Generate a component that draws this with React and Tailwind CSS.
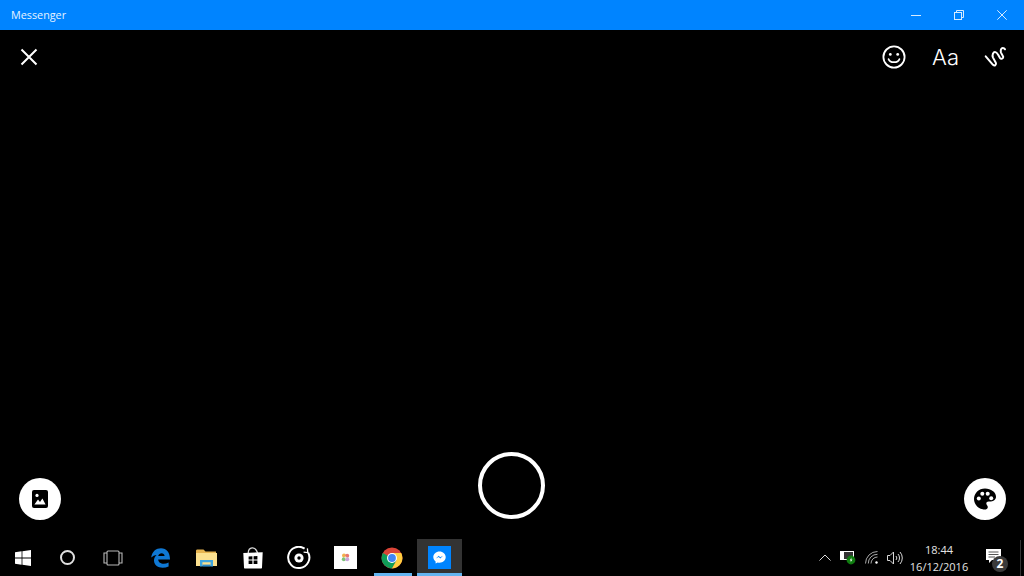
import React from 'react';

const ui = { fontFamily: '"Open Sans", "Noto Sans", sans-serif' };

function CloseIcon() {
  return (
    <svg width="18" height="18" viewBox="0 0 18 18" fill="none" stroke="white" strokeWidth="2">
      <path d="M1.5 1.5 L16.5 16.5 M16.5 1.5 L1.5 16.5" />
    </svg>
  );
}

function Smiley() {
  return (
    <svg width="24" height="24" viewBox="0 0 24 24" fill="none" stroke="white" strokeWidth="1.8">
      <circle cx="12" cy="12" r="10.6" />
      <circle cx="8.3" cy="9.4" r="1.4" fill="white" stroke="none" />
      <circle cx="15.7" cy="9.4" r="1.4" fill="white" stroke="none" />
      <path d="M6.6 14.2 C8 18.2 16 18.2 17.4 14.2" strokeLinecap="round" />
    </svg>
  );
}

function Squiggle() {
  return (
    <svg width="24" height="24" viewBox="4 3 24 24" fill="none" stroke="white" strokeWidth="2" strokeLinecap="round" strokeLinejoin="round">
      <path d="M5.7 14.3 L13 22.8 C14.6 24.2 16.8 22.8 15.8 20.8 L13 15.6 C11.8 12.4 13.4 10 15 10 C16.6 10 17.4 11.4 18.3 13 L20 16 C21 17.4 23.6 16.6 23.2 14.8 L21 10.6 C20.2 8.4 21.2 6 22.8 6 C23.8 6 24.6 6.6 25 7.3" />
    </svg>
  );
}

function ImageIcon() {
  return (
    <svg width="16" height="18" viewBox="0 0 16 18">
      <rect x="0" y="0" width="16" height="18" rx="2" fill="black" />
      <circle cx="5" cy="5.4" r="1.6" fill="white" />
      <path d="M2.4 14.4 L6 9.4 L8 12 L10.4 8.6 L13.6 14.4 Z" fill="white" />
    </svg>
  );
}

function PaletteIcon() {
  return (
    <svg width="24" height="24" viewBox="0 0 24 24">
      <path d="M12 1.5 C5.8 1.5 1 6.2 1 12 C1 17.8 5.8 22.5 12 22.5 C13.8 22.5 14.8 21.4 14.8 20 C14.8 19.2 14.4 18.7 14 18.2 C13.6 17.7 13.3 17.2 13.3 16.6 C13.3 15.3 14.3 14.4 15.6 14.4 L18 14.4 C20.9 14.4 23 12.4 23 9.8 C23 5.1 18 1.5 12 1.5 Z" fill="black" />
      <circle cx="5.8" cy="11.6" r="2" fill="white" />
      <circle cx="9.3" cy="6.8" r="2" fill="white" />
      <circle cx="14.7" cy="6.8" r="2" fill="white" />
      <circle cx="18.2" cy="11.2" r="2" fill="white" />
    </svg>
  );
}

function WindowsLogo() {
  return (
    <svg width="16" height="16" viewBox="0 0 16 16" fill="white">
      <path d="M0 2.3 L6.6 1.3 V7.5 H0 Z M7.4 1.2 L16 0 V7.5 H7.4 Z M0 8.4 H6.6 V14.7 L0 13.7 Z M7.4 8.4 H16 V16 L7.4 14.8 Z" />
    </svg>
  );
}

function TaskView() {
  return (
    <svg width="20" height="16" viewBox="0 0 20 16" fill="none" stroke="#b8b8b8" strokeWidth="1.1">
      <rect x="4" y="1" width="12" height="14" rx="1" />
      <path d="M4 3 H1 V13 H4 M16 3 H19 V13 H16" />
    </svg>
  );
}

function EdgeLogo() {
  return (
    <svg width="19" height="20" viewBox="0 0 19 20">
      <path d="M0.2 9.6 C1 3.4 5.2 0.2 10 0.2 C15.6 0.2 19 4.4 19 11.4 H7.2 C7.4 15.4 12.6 17 17.6 14.4 V18.4 C11.4 21.2 3.4 19.6 3 12.8 C2.9 10.6 3.8 8.6 5.6 7 C3.6 7.2 1.6 8.2 0.2 9.6 Z M7.2 8 H13.6 C13.4 4.2 8 4.2 7.2 8 Z" fill="#0f78d4" fillRule="evenodd" />
    </svg>
  );
}

function ExplorerLogo() {
  return (
    <svg width="21" height="18" viewBox="0 0 21 18">
      <path d="M0 2 C0 1 0.5 0.5 1.5 0.5 H7.5 L9.5 2.5 H20 V5 H0 Z" fill="#e6b450" />
      <rect x="0" y="4" width="21" height="13" fill="#fbe08f" />
      <path d="M4 17.5 V11 H17 V17.5 H14.6 V13.2 H6.4 V17.5 Z" fill="#3fa5df" />
      <rect x="6.4" y="15.6" width="8.2" height="2" fill="#2b86c5" />
    </svg>
  );
}

function StoreLogo() {
  return (
    <svg width="20" height="23" viewBox="0 0 20 23">
      <path d="M5.2 7 C5.6 1 12 -0.4 14.6 7" fill="none" stroke="#d8d8d8" strokeWidth="1.3" />
      <path d="M0.3 7 L19.7 6.2 L19 21.6 C19 22.2 18.6 22.6 18 22.6 H2 C1.4 22.6 1 22.2 1 21.6 Z" fill="white" />
      <path d="M5.6 10.4 L9.4 10.2 V13.6 H5.6 Z M10.6 10.2 L14.4 10 V13.6 H10.6 Z M5.6 14.6 H9.4 V18 H5.6 Z M10.6 14.6 H14.4 V18 H10.6 Z" fill="black" />
    </svg>
  );
}

function GrooveLogo() {
  return (
    <svg width="24" height="24" viewBox="0 0 24 24" fill="none">
      <path d="M17.6 2.6 A10.6 10.6 0 1 0 21.2 6.6" stroke="white" strokeWidth="2" />
      <path d="M20.4 2.4 L20.8 6.6 L16.6 6.2" stroke="white" strokeWidth="1.3" />
      <circle cx="12" cy="12" r="4.6" fill="white" />
      <circle cx="12" cy="12" r="1.7" fill="black" />
    </svg>
  );
}

function PinwheelTile() {
  return (
    <div className="w-[23px] h-[23px] bg-white flex items-center justify-center">
      <svg width="9" height="9" viewBox="0 0 9 9">
        <circle cx="3" cy="2.6" r="2" fill="#f2b04c" />
        <circle cx="6.2" cy="2.8" r="2" fill="#e8756f" />
        <circle cx="2.8" cy="6.2" r="2" fill="#7cc47a" />
        <circle cx="6.2" cy="6.2" r="2" fill="#c9a4dc" />
        <circle cx="4.5" cy="4.5" r="1" fill="#e9ecd8" />
      </svg>
    </div>
  );
}

function ChromeLogo() {
  return (
    <svg width="22" height="22" viewBox="0 0 22 22">
      <circle cx="11" cy="11" r="10.5" fill="#db4437" />
      <path d="M11 11 L1.8 6 A10.5 10.5 0 0 0 11 21.5 L16.2 12.5 Z" fill="#0f9d58" />
      <path d="M11 6 H20.2 A10.5 10.5 0 0 1 11 21.5 L15.4 13.5 Z" fill="#ffcd40" />
      <circle cx="11" cy="11" r="5" fill="white" />
      <circle cx="11" cy="11" r="3.9" fill="#4285f4" />
    </svg>
  );
}

function MessengerTile() {
  return (
    <div className="w-[23px] h-[23px] bg-[#0084ff] flex items-center justify-center">
      <svg width="13" height="13" viewBox="0 0 13 13">
        <path d="M6.5 0.5 C3 0.5 0.3 3 0.3 6.1 C0.3 7.9 1.2 9.4 2.6 10.4 V12.6 L4.7 11.4 C5.3 11.6 5.9 11.7 6.5 11.7 C10 11.7 12.7 9.2 12.7 6.1 C12.7 3 10 0.5 6.5 0.5 Z" fill="white" />
        <path d="M2.9 7.6 L5.7 4.7 L7.2 6.2 L10 4.7 L7.3 7.6 L5.7 6.1 Z" fill="#0084ff" />
      </svg>
    </div>
  );
}

function BatteryIcon() {
  return (
    <svg width="16" height="15" viewBox="0 0 16 15">
      <rect x="0.5" y="1.5" width="13" height="8" fill="#333" stroke="white" strokeWidth="1" />
      <rect x="1" y="2" width="3" height="7" fill="white" />
      <circle cx="11" cy="10" r="4.4" fill="#107c10" />
      <path d="M11.5 7.4 L9.8 10.4 H11 L10.5 12.6 L12.4 9.4 H11.2 Z" fill="white" />
    </svg>
  );
}

function WifiIcon() {
  return (
    <svg width="13" height="13" viewBox="0 0 13 13" fill="none" stroke="#a8a8a8" strokeWidth="1">
      <path d="M0.5 12.5 A12 12 0 0 1 12.5 0.5" />
      <path d="M3.3 12.5 A9 9 0 0 1 12.5 3.3" />
      <path d="M6 12.5 A6.5 6.5 0 0 1 12.5 6" />
      <circle cx="11.5" cy="11.5" r="1.2" fill="white" stroke="none" />
    </svg>
  );
}

function SpeakerIcon() {
  return (
    <svg width="16" height="14" viewBox="0 0 16 14" fill="none" stroke="#d8d8d8" strokeWidth="1">
      <path d="M0.5 4.5 H3 L6.5 1 V13 L3 9.5 H0.5 Z" />
      <path d="M9 5 A3 3 0 0 1 9 9" />
      <path d="M11 3 A6 6 0 0 1 11 11" />
      <path d="M13 1 A9 9 0 0 1 13 13" />
    </svg>
  );
}

function NotificationIcon() {
  return (
    <div className="relative w-[24px] h-[24px]">
      <svg width="16" height="15" viewBox="0 0 16 15" className="absolute left-0 top-0">
        <path d="M0 0 H15 V11 H6 L3 14 V11 H0 Z" fill="white" />
        <path d="M2.5 3 H12.5 M2.5 5.5 H12.5 M2.5 8 H9" stroke="#555" strokeWidth="1" />
      </svg>
      <div className="absolute left-[6px] top-[7px] w-[16px] h-[16px] rounded-full bg-[#3a3a3a] text-white text-[12px] font-bold leading-[16px] text-center">2</div>
    </div>
  );
}

const apps = [
  { id: 'edge', icon: <EdgeLogo /> },
  { id: 'explorer', icon: <ExplorerLogo /> },
  { id: 'store', icon: <StoreLogo /> },
  { id: 'groove', icon: <GrooveLogo /> },
  { id: 'tile', icon: <PinwheelTile /> },
  { id: 'chrome', icon: <ChromeLogo />, running: true },
];

export default function App() {
  return (
    <div className="w-[1024px] h-[576px] flex flex-col bg-black overflow-hidden" style={ui}>
      {/* Title bar */}
      <div className="h-[30px] bg-[#0084ff] flex items-center justify-between text-white shrink-0">
        <span className="pl-[11px] text-[10.8px] leading-none text-[#e6f3ff]">Messenger</span>
        <div className="flex items-center h-full pr-px">
          <div className="w-[43px] flex justify-center">
            <svg width="10" height="10" viewBox="0 0 10 10" stroke="#d6ebff" strokeWidth="1"><path d="M0 5.5 H10" /></svg>
          </div>
          <div className="w-[43px] flex justify-center">
            <svg width="10" height="10" viewBox="0 0 10 10" fill="none" stroke="#d6ebff" strokeWidth="1"><rect x="0.5" y="2.5" width="7" height="7" /><path d="M2.5 2.5 V0.5 H9.5 V7.5 H7.5" /></svg>
          </div>
          <div className="w-[43px] flex justify-center">
            <svg width="10" height="10" viewBox="0 0 10 10" stroke="#d6ebff" strokeWidth="1"><path d="M0.3 0.3 L9.7 9.7 M9.7 0.3 L0.3 9.7" /></svg>
          </div>
        </div>
      </div>

      {/* Canvas */}
      <div className="flex-1 flex flex-col justify-between">
        <div className="flex items-center justify-between pt-[15px] pl-[19.5px] pr-[16px]">
          <CloseIcon />
          <div className="flex items-center">
            <Smiley />
            <span className="ml-[26px] mr-[25px] text-[22px] font-light leading-[24px] text-white" style={{ fontFamily: 'Inter, sans-serif' }}>Aa</span>
            <Squiggle />
          </div>
        </div>
        <div className="flex items-end justify-between pl-[19px] pr-[18px] pb-[19px]">
          <button className="w-[42px] h-[42px] rounded-full bg-white flex items-center justify-center">
            <ImageIcon />
          </button>
          <div className="w-[67px] h-[67px] mb-px mr-[2px] rounded-full border-4 border-white" />
          <button className="w-[42px] h-[42px] rounded-full bg-white flex items-center justify-center">
            <PaletteIcon />
          </button>
        </div>
      </div>

      {/* Taskbar */}
      <div className="h-[37px] bg-black flex items-stretch shrink-0">
        <div className="w-[45px] flex items-center justify-center"><WindowsLogo /></div>
        <div className="w-[45px] flex items-center justify-center">
          <div className="w-[15px] h-[15px] rounded-full border-2 border-[#e0e0e0]" />
        </div>
        <div className="w-[45px] flex items-center justify-center"><TaskView /></div>
        <div className="ml-[2px] flex items-stretch">
          {apps.map((a) => (
            <div key={a.id} className="relative w-[46.4px] flex items-center justify-center">
              {a.icon}
              {a.running && <div className="absolute bottom-0 left-[5px] right-[3.4px] h-[3px] bg-[#63b4f0]" />}
            </div>
          ))}
          <div className="relative ml-[1.6px] w-[45px] bg-[#333333] flex items-center justify-center">
            <MessengerTile />
            <div className="absolute bottom-0 left-0 right-0 h-[3px] bg-[#63b4f0]" />
          </div>
        </div>
        <div className="flex-1" />
        <div className="flex items-center">
          <svg width="12" height="7" viewBox="0 0 12 7" fill="none" stroke="#d8d8d8" strokeWidth="1" className="mr-[9px]"><path d="M0.5 6.5 L6 1 L11.5 6.5" /></svg>
          <div className="mr-[9px] flex"><BatteryIcon /></div>
          <div className="mr-[9px] flex"><WifiIcon /></div>
          <SpeakerIcon />
          <div className="w-[70px] ml-px text-center text-[11px] leading-[17px] text-[#e4e4e4]">
            <div>18:44</div>
            <div>16/12/2016</div>
          </div>
          <div className="ml-[12px] mr-[10px] mt-[7px]"><NotificationIcon /></div>
          <div className="w-px h-[36px] bg-[#333333] mr-[3px]" />
        </div>
      </div>
    </div>
  );
}
